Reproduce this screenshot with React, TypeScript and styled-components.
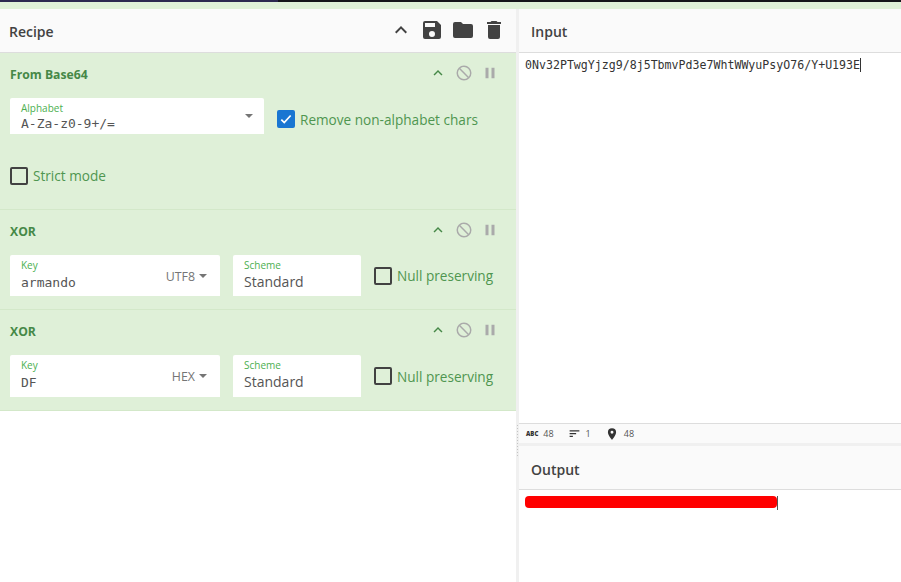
import React from "react";
import styled, { createGlobalStyle } from "styled-components";

const Global = createGlobalStyle`
  html, body { margin: 0; padding: 0; background: #fff; }
  body { font-family: "Open Sans", "Noto Sans", sans-serif; overflow: hidden; }
  #root { width: 901px; height: 582px; overflow: hidden; }
`;

const Page = styled.div`
  width: 901px;
  height: 582px;
  display: flex;
  flex-direction: column;
  background: #fff;
`;
const TopStrip = styled.div`
  height: 2px;
  display: grid;
  grid-template-columns: 278px 1fr;
  background: #15151a;
`;
const TopStripAccent = styled.div`
  background: #2c2850;
`;
const GreenStrip = styled.div`
  height: 7px;
  background: #dff0d8;
`;
const Main = styled.div`
  flex: 1;
  display: grid;
  grid-template-columns: 516px 3px 1fr;
  min-height: 0;
`;
const Column = styled.div`
  display: flex;
  flex-direction: column;
  min-width: 0;
  min-height: 0;
`;
const Divider = styled.div`
  background: #f0f0f0;
  padding-top: 416px;
`;
const Grip = styled.div`
  width: 1px;
  height: 33px;
  margin-left: 1px;
  background: repeating-linear-gradient(to bottom, #c4c4c4 0 1px, transparent 1px 3px);
`;
const PanelHeader = styled.div<{ $pad: number }>`
  height: 43px;
  flex: none;
  display: flex;
  align-items: center;
  justify-content: space-between;
  padding: 0 ${(p) => p.$pad}px;
  background: #fafafa;
  border-bottom: 1px solid #dddddd;
  box-sizing: content-box;
`;
const PanelTitle = styled.div<{ $top: number }>`
  font-size: 14px;
  font-weight: 600;
  color: #424242;
  margin-top: ${(p) => p.$top}px;
`;
const HeaderIcons = styled.div`
  display: flex;
  align-items: center;
  gap: 7px;
  padding-right: 1px;
  margin-top: -2px;
  color: #424242;
`;
const Operation = styled.section<{ $h: number }>`
  height: ${(p) => p.$h}px;
  box-sizing: border-box;
  flex: none;
  background: #dff0d8;
  border-bottom: 1px solid #d3e8c9;
  padding: 12px 12px 0 10px;
  color: #468847;
`;
const OpHead = styled.div`
  display: flex;
  align-items: center;
  justify-content: space-between;
  height: 19px;
`;
const OpName = styled.div`
  font-size: 12.2px;
  font-weight: 700;
  color: #468847;
`;
const OpIcons = styled.div`
  display: flex;
  align-items: center;
  gap: 8px;
  margin-top: -3px;
  padding-right: 5px;
`;
const Row = styled.div<{ $top: number }>`
  display: flex;
  align-items: center;
  gap: 13px;
  margin-top: ${(p) => p.$top}px;
`;
const Field = styled.div<{ $w: number; $h: number }>`
  width: ${(p) => p.$w}px;
  height: ${(p) => p.$h}px;
  box-sizing: border-box;
  flex: none;
  background: #fff;
  border-radius: 2px 2px 0 0;
  padding: 4px 11px 0;
  display: flex;
  justify-content: space-between;
`;
const FieldText = styled.div`
  display: flex;
  flex-direction: column;
`;
const FieldLabel = styled.label`
  font-size: 10px;
  line-height: 13px;
  color: #4caf50;
`;
const MonoValue = styled.div<{ $gap: number }>`
  font-family: "DejaVu Sans Mono", monospace;
  font-size: 13px;
  line-height: 16px;
  margin-top: ${(p) => p.$gap}px;
  color: #555;
`;
const PlainValue = styled.div`
  font-size: 14px;
  line-height: 18px;
  margin-top: 1px;
  color: #555;
`;
const Dropdown = styled.div`
  display: flex;
  align-items: center;
  gap: 4px;
  height: 16px;
  margin-top: 9px;
  padding-right: 2px;
  font-size: 12.4px;
  color: #757575;
`;
const Caret = styled.span<{ $top?: number }>`
  width: 0;
  height: 0;
  border-left: 4px solid transparent;
  border-right: 4px solid transparent;
  border-top: 4px solid #757575;
  margin-top: ${(p) => p.$top ?? 0}px;
`;
const Check = styled.div<{ $shift?: number }>`
  display: flex;
  align-items: center;
  gap: 5px;
  font-size: 13.6px;
  color: #4f9650;
  white-space: nowrap;
  margin-top: ${(p) => p.$shift ?? 0}px;
`;
const Box = styled.span<{ $on?: boolean }>`
  width: 18px;
  height: 18px;
  box-sizing: border-box;
  border-radius: 2px;
  border: 2px solid ${(p) => (p.$on ? "#1976d2" : "#424242")};
  background: ${(p) => (p.$on ? "#1976d2" : "transparent")};
  display: inline-flex;
  align-items: center;
  justify-content: center;
  flex: none;
`;
const InputBody = styled.div`
  height: 370px;
  flex: none;
  padding: 5px 6px 0;
  box-sizing: border-box;
  font-family: "DejaVu Sans Mono", monospace;
  font-size: 11.6px;
  line-height: 15px;
  color: #333;
  white-space: pre;
`;
const Cursor = styled.span`
  border-right: 1px solid #333;
`;
const StatusBar = styled.div`
  height: 20px;
  flex: none;
  box-sizing: border-box;
  display: flex;
  align-items: center;
  padding-left: 7px;
  background: #fafafa;
  border-top: 1px solid #dddddd;
  font-size: 9px;
  color: #555;
`;
const Stat = styled.div<{ $gap: number }>`
  display: flex;
  align-items: center;
  gap: 5px;
  margin-right: ${(p) => p.$gap}px;
`;
const Abc = styled.span`
  font-size: 6px;
  font-weight: 800;
  color: #333;
`;
const Gutter = styled.div`
  height: 3px;
  flex: none;
  background: #f0f0f0;
`;
const OutputBody = styled.div`
  padding: 6px 6px 0;
  display: flex;
`;
const Redacted = styled.div`
  width: 252px;
  height: 12px;
  background: #ff0000;
  border-radius: 4px;
`;
const OutCursor = styled.div`
  width: 1px;
  height: 14px;
  background: #555;
`;

const Icon = ({ d, size, color }: { d: string; size: number; color: string }) => (
  <svg width={size} height={size} viewBox="0 0 24 24" fill={color} aria-hidden="true">
    <path d={d} />
  </svg>
);

const UP = "M7.41 15.41 12 10.83l4.59 4.58L18 14l-6-6-6 6z";
const SAVE = "M17 3H5a2 2 0 0 0-2 2v14a2 2 0 0 0 2 2h14a2 2 0 0 0 2-2V7l-4-4zm-5 16a3 3 0 1 1 0-6 3 3 0 0 1 0 6zm3-10H5V5h10v4z";
const FOLDER = "M10 4H4a2 2 0 0 0-2 2v12a2 2 0 0 0 2 2h16a2 2 0 0 0 2-2V8a2 2 0 0 0-2-2h-8l-2-2z";
const TRASH = "M6 19a2 2 0 0 0 2 2h8a2 2 0 0 0 2-2V7H6v12zM19 4h-3.5l-1-1h-5l-1 1H5v2h14V4z";
const BLOCK = "M12 2a10 10 0 1 1 0 20 10 10 0 0 1 0-20zM20 12a8 8 0 0 0-8-8c-1.85 0-3.55.63-4.9 1.69L18.31 16.9A7.9 7.9 0 0 0 20 12zm-8 8a7.9 7.9 0 0 0 4.9-1.69L5.69 7.1A7.9 7.9 0 0 0 4 12a8 8 0 0 0 8 8z";
const PAUSE = "M6 19h4V5H6v14zm8-14v14h4V5h-4z";
const LINES = "M3 6h18v2.5H3zM3 11h12v2.5H3zM3 16h6v2.5H3z";
const PIN = "M12 2a7 7 0 0 0-7 7c0 5.25 7 13 7 13s7-7.75 7-13a7 7 0 0 0-7-7zm0 9.5a2.5 2.5 0 1 1 0-5 2.5 2.5 0 0 1 0 5z";

const OpControls = () => (
  <OpIcons>
    <Icon d={UP} size={18} color="#468847" />
    <Icon d={BLOCK} size={18} color="#aaaaaa" />
    <Icon d={PAUSE} size={18} color="#aaaaaa" />
  </OpIcons>
);

const Unchecked = ({ label }: { label: string }) => (
  <Check>
    <Box />
    {label}
  </Check>
);

const XorOp = ({ value, enc, h, fieldH }: { value: string; enc: string; h: number; fieldH: number }) => (
  <Operation $h={h}>
    <OpHead>
      <OpName>XOR</OpName>
      <OpControls />
    </OpHead>
    <Row $top={14}>
      <Field $w={210} $h={fieldH}>
        <FieldText>
          <FieldLabel>Key</FieldLabel>
          <MonoValue $gap={3}>{value}</MonoValue>
        </FieldText>
        <Dropdown>
          {enc}
          <Caret />
        </Dropdown>
      </Field>
      <Field $w={128} $h={fieldH}>
        <FieldText>
          <FieldLabel>Scheme</FieldLabel>
          <PlainValue>Standard</PlainValue>
        </FieldText>
      </Field>
      <Unchecked label="Null preserving" />
    </Row>
  </Operation>
);

export default function App() {
  return (
    <Page>
      <Global />
      <TopStrip>
        <TopStripAccent />
      </TopStrip>
      <GreenStrip />
      <Main>
        <Column>
          <PanelHeader $pad={9}>
            <PanelTitle $top={2}>Recipe</PanelTitle>
            <HeaderIcons>
              <Icon d={UP} size={24} color="#424242" />
              <Icon d={SAVE} size={24} color="#424242" />
              <Icon d={FOLDER} size={24} color="#424242" />
              <Icon d={TRASH} size={24} color="#424242" />
            </HeaderIcons>
          </PanelHeader>
          <Operation $h={157}>
            <OpHead>
              <OpName>From Base64</OpName>
              <OpControls />
            </OpHead>
            <Row $top={14}>
              <Field $w={254} $h={36}>
                <FieldText>
                  <FieldLabel>Alphabet</FieldLabel>
                  <MonoValue $gap={1}>A-Za-z0-9+/=</MonoValue>
                </FieldText>
                <Caret $top={12} />
              </Field>
              <Check $shift={6}>
                <Box $on>
                  <svg width="14" height="14" viewBox="0 0 24 24" fill="none" stroke="#fff" strokeWidth="3">
                    <path d="M4 13l5 5L20 6" />
                  </svg>
                </Box>
                Remove non-alphabet chars
              </Check>
            </Row>
            <Row $top={32}>
              <Unchecked label="Strict mode" />
            </Row>
          </Operation>
          <XorOp value="armando" enc="UTF8" h={100} fieldH={41} />
          <XorOp value="DF" enc="HEX" h={101} fieldH={42} />
        </Column>
        <Divider>
          <Grip />
        </Divider>
        <Column>
          <PanelHeader $pad={12}>
            <PanelTitle $top={2}>Input</PanelTitle>
          </PanelHeader>
          <InputBody>
            <Cursor>0Nv32PTwgYjzg9/8j5TbmvPd3e7WhtWWyuPsyO76/Y+U193E</Cursor>
          </InputBody>
          <StatusBar>
            <Stat $gap={14}>
              <Abc>ABC</Abc>
              48
            </Stat>
            <Stat $gap={14}>
              <Icon d={LINES} size={13} color="#333" />
              1
            </Stat>
            <Stat $gap={0}>
              <Icon d={PIN} size={14} color="#333" />
              48
            </Stat>
          </StatusBar>
          <Gutter />
          <PanelHeader $pad={12}>
            <PanelTitle $top={4}>Output</PanelTitle>
          </PanelHeader>
          <OutputBody>
            <Redacted />
            <OutCursor />
          </OutputBody>
        </Column>
      </Main>
    </Page>
  );
}
